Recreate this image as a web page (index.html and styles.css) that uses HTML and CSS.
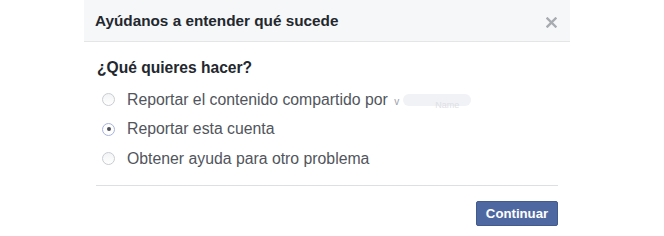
FILE: index.html
```html
<!DOCTYPE html>
<html lang="es">
<head>
<meta charset="utf-8">
<link rel="stylesheet" href="styles.css">
</head>
<body>
<div class="dialog">
  <div class="header">
    <span class="title">Ayúdanos a entender qué sucede</span>
    <span class="close" aria-label="Cerrar">
      <svg width="11" height="11" viewBox="0 0 11 11"><path d="M1.5 1.5L9.5 9.5M9.5 1.5L1.5 9.5" stroke="#a8abb0" stroke-width="2.4" stroke-linecap="square"/></svg>
    </span>
  </div>
  <div class="body">
    <div class="question">¿Qué quieres hacer?</div>
    <ul class="options">
      <li class="option"><span class="radio"></span><span class="label">Reportar el contenido compartido por <span class="blur"><span class="blur-v">v</span><span class="blur-pill"><span class="blur-txt">Name</span></span></span></span></li>
      <li class="option"><span class="radio checked"></span><span class="label">Reportar esta cuenta</span></li>
      <li class="option"><span class="radio"></span><span class="label">Obtener ayuda para otro problema</span></li>
    </ul>
    <div class="footer">
      <button class="btn">Continuar</button>
    </div>
  </div>
</div>
</body>
</html>
```

FILE: styles.css
```css
html, body {
  margin: 0;
  padding: 0;
  background: #ffffff;
}
body {
  font-family: "Liberation Sans", Arial, sans-serif;
  width: 664px;
  height: 236px;
  overflow: hidden;
}
.dialog {
  margin-left: 84px;
  width: 486px;
}
.header {
  height: 41px;
  background: #f6f7f9;
  border-bottom: 1px solid #e5e5e5;
  display: flex;
  align-items: center;
  justify-content: space-between;
  padding: 0 12px 0 11px;
}
.title {
  font-size: 15.3px;
  font-weight: bold;
  color: #23272e;
}
.close {
  display: flex;
  margin-top: 3px;
  margin-right: 1px;
}
.body {
  padding: 0 12px;
}
.question {
  font-size: 15.6px;
  font-weight: bold;
  color: #23272e;
  padding-top: 16px;
  padding-left: 1px;
  line-height: 19px;
}
.options {
  list-style: none;
  margin: 8px 0 0 0;
  padding: 0 0 0 6px;
}
.option {
  display: flex;
  align-items: center;
  height: 29.5px;
}
.radio {
  width: 11px;
  height: 11px;
  border-radius: 50%;
  border: 1px solid #c9ccd1;
  background: linear-gradient(#f3f4f6, #ffffff);
  box-sizing: content-box;
  flex: none;
  margin-right: 12px;
  position: relative;
}
.radio.checked {
  border-color: #a7b3dd;
  background: #fff;
}
.radio.checked::after {
  content: "";
  position: absolute;
  left: 3.5px;
  top: 3.5px;
  width: 4px;
  height: 4px;
  border-radius: 50%;
  background: #4b4f56;
}
.label {
  font-size: 15.8px;
  color: #51555c;
  display: flex;
  align-items: center;
  white-space: pre;
}
.blur {
  display: inline-flex;
  align-items: center;
}
.blur-v {
  color: #9aa0aa;
  font-size: 10px;
  margin-left: 2px;
  margin-right: 4px;
  margin-top: 3px;
}
.blur-pill {
  display: inline-block;
  width: 68px;
  height: 12px;
  border-radius: 6px;
  background: #f1f2f5;
  text-align: right;
  padding-right: 12px;
  box-sizing: border-box;
}
.blur-txt {
  font-size: 9px;
  color: #dde0e5;
  line-height: 14px;
}
.footer {
  margin-top: 11px;
  border-top: 1px solid #dddfe2;
  display: flex;
  justify-content: flex-end;
  padding-top: 15px;
}
.btn {
  font-family: "Liberation Sans", Arial, sans-serif;
  font-size: 13.2px;
  font-weight: bold;
  color: #ffffff;
  background: #4e69a2;
  border: 1px solid #435a8b;
  border-radius: 2px;
  height: 25px;
  width: 82px;
  padding: 0;
  cursor: pointer;
}
```
